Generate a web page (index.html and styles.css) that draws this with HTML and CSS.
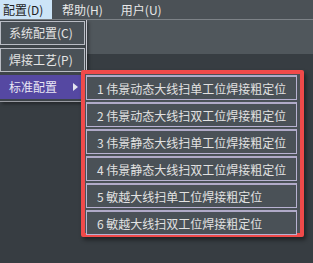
FILE: index.html
```html
<!DOCTYPE html>
<html lang="zh">
<head>
<meta charset="utf-8">
<link rel="stylesheet" href="styles.css">
</head>
<body>
<div class="app">
  <div class="menubar">
    <span class="mi mi-first active">配置(D)</span>
    <span class="mi">帮助(H)</span>
    <span class="mi">用户(U)</span>
  </div>
  <div class="toolbar"></div>
  <div class="workspace"></div>

  <div class="dropdown">
    <div class="item">系统配置(C)</div>
    <div class="item">焊接工艺(P)</div>
    <div class="item selected">标准配置<span class="arrow"></span></div>
  </div>

  <div class="submenu">
    <div class="sitem">1 伟景动态大线扫单工位焊接粗定位</div>
    <div class="sitem">2 伟景动态大线扫双工位焊接粗定位</div>
    <div class="sitem">3 伟景静态大线扫单工位焊接粗定位</div>
    <div class="sitem">4 伟景静态大线扫双工位焊接粗定位</div>
    <div class="sitem">5 敏越大线扫单工位焊接粗定位</div>
    <div class="sitem">6 敏越大线扫双工位焊接粗定位</div>
  </div>
</div>
</body>
</html>
```

FILE: styles.css
```css
* { box-sizing: border-box; }
html, body {
  margin: 0;
  padding: 0;
  width: 313px;
  height: 263px;
  overflow: hidden;
  background: #373d42;
  font-family: "Noto Sans CJK SC", "Noto Sans", sans-serif;
  font-size: 12px;
  color: #e4e4e4;
}
.app {
  position: relative;
  width: 313px;
  height: 263px;
  display: flex;
  flex-direction: column;
}
.menubar {
  height: 19px;
  background: #4b5156;
  display: flex;
  align-items: stretch;
  border-bottom: 1px solid #7d8287;
  box-sizing: content-box;
}
.mi {
  display: flex;
  align-items: center;
  padding: 0 8px 0 10px;
  line-height: 19px;
  color: #e8e8e8;
}
.mi-first { padding: 0 8px 0 3px; width: 52px; }
.mi.active {
  background: #cce4f7;
  color: #1e1e1e;
}
.toolbar {
  height: 34px;
  background: #50575c;
}
.workspace {
  flex: 1;
  background: #373d42;
}

.dropdown {
  position: absolute;
  left: 0;
  top: 20px;
  width: 87px;
  padding: 1px 1px 2px 0;
  background: #3e4449;
  border-right: 1px solid #c9c9d2;
  border-bottom: 1px solid #9a9ca3;
  box-shadow: 2px 2px 3px rgba(0,0,0,0.35);
  display: flex;
  flex-direction: column;
  gap: 3px;
}
.item {
  position: relative;
  height: 24px;
  line-height: 22px;
  padding-left: 8px;
  background: #4a5157;
  border: 1px solid #b9bcc4;
  color: #e4e4e4;
}
.item.selected {
  background: #5548a2;
  border-color: #5548a2;
  color: #e8e6f4;
}
.arrow {
  position: absolute;
  left: 72px;
  top: 7px;
  width: 0;
  height: 0;
  border-top: 4px solid transparent;
  border-bottom: 4px solid transparent;
  border-left: 5px solid #e4e4f0;
}

.submenu {
  position: absolute;
  left: 81px;
  top: 70px;
  width: 223px;
  height: 167px;
  border: 4px solid #f04a4a;
  border-radius: 2px;
  background: #4a5157;
  padding: 1px 3px 1px 1px;
  box-shadow: 2px 3px 4px rgba(0,0,0,0.45);
  display: flex;
  flex-direction: column;
  gap: 2px;
}
.sitem {
  height: 25px;
  line-height: 23px;
  padding-left: 10px;
  background: #4a5157;
  border: 1px solid #b8b2d2;
  border-top: 2px solid #b0aac8;
  color: #e2e2e2;
  white-space: nowrap;
}
```
